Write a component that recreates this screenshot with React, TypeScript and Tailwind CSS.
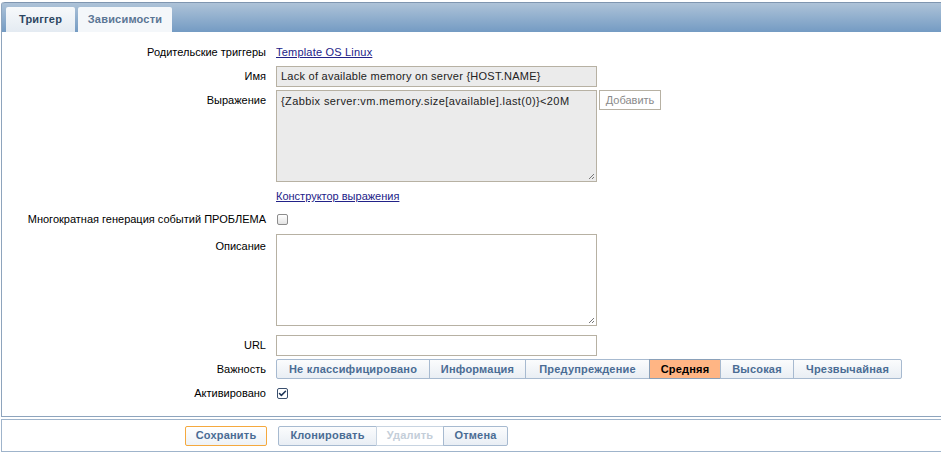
import { Check } from 'lucide-react';

const SEVERITIES = [
    { label: 'Не классифицировано', width: 'w-[154px]' },
    { label: 'Информация', width: 'w-[97px]' },
    { label: 'Предупреждение', width: 'w-[125px]' },
    { label: 'Средняя', width: 'w-[72px]', active: true },
    { label: 'Высокая', width: 'w-[74px]' },
    { label: 'Чрезвычайная', width: 'w-[109px]' },
];

function Row({
    label,
    children,
    className = '',
    labelClass = '',
    top,
}: {
    label: string;
    children: React.ReactNode;
    className?: string;
    labelClass?: string;
    top?: boolean;
}) {
    return (
        <div className={`flex gap-[10px] ${top ? 'items-start' : 'items-center'} ${className}`}>
            <div className={`w-[264px] shrink-0 whitespace-nowrap text-right text-black ${labelClass}`}>{label}</div>
            <div className="flex items-start gap-[2px] whitespace-nowrap">{children}</div>
        </div>
    );
}

function Checkbox({ checked }: { checked?: boolean }) {
    return (
        <span
            className={`ml-px flex h-[11px] w-[11px] items-center justify-center rounded-[2px] border ${
                checked ? 'border-[#3a4f6e] bg-white' : 'border-[#8c8c8c] bg-gradient-to-b from-white to-[#e3e3e3]'
            }`}
        >
            {checked && <Check className="h-[11px] w-[11px] text-[#1d3557]" strokeWidth={4} />}
        </span>
    );
}

function Grip() {
    return (
        <svg className="absolute bottom-[1px] right-[1px] h-[8px] w-[8px]" viewBox="0 0 8 8">
            <path d="M7 2 2 7M7 5 5 7" stroke="#777" strokeWidth="1" />
        </svg>
    );
}

export default function App() {
    return (
        <div className="h-[454px] w-[941px] overflow-hidden bg-white pt-[2px] text-[11px] leading-[13px] [font-family:'Liberation_Sans',Arial,sans-serif]">
            {/* main frame */}
            <div className="ml-px h-[415px] rounded-tl-[3px] border-b border-l border-[#8ea4bd]">
                <div className="flex h-[30px] items-end gap-[3px] rounded-tl-[3px] border-t border-[#7f96b0] bg-gradient-to-b from-[#aec3d8] to-[#749bc3] pl-[4px]">
                    <div className="flex h-[25px] w-[69px] items-center justify-center rounded-t-[2px] bg-gradient-to-b from-[#f7f9fb] to-[#e4ebf2] font-bold tracking-[0.2px] text-[#2d4662]">
                        Триггер
                    </div>
                    <div className="flex h-[25px] w-[94px] items-center justify-center rounded-t-[2px] bg-[#f4f7fa] font-bold tracking-[0.2px] text-[#5a7594]">
                        Зависимости
                    </div>
                </div>

                <div className="flex flex-col">
                    <Row label="Родительские триггеры" className="mt-[14px]">
                        <a className="text-[#222288] underline tracking-[0.2px]">Template OS Linux</a>
                    </Row>
                    <Row label="Имя" className="mt-[7px]">
                        <div className="flex h-[21px] w-[321px] items-center border border-[#b7b1a3] bg-[#ebebeb] px-[4px] tracking-[0.25px] text-[#222]">
                            Lack of available memory on server {'{HOST.NAME}'}
                        </div>
                    </Row>
                    <Row label="Выражение" top className="mt-[3px]" labelClass="pt-[4px]">
                        <div className="relative h-[92px] w-[321px] border border-[#b7b1a3] bg-[#ebebeb] px-[4px] pt-[4px] tracking-[0.4px] text-[#222]">
                            {'{Zabbix server:vm.memory.size[available].last(0)}<20M'}
                            <Grip />
                        </div>
                        <button className="h-[20px] w-[62px] border border-[#b7b1a3] bg-white text-[#8a8a8a]">Добавить</button>
                    </Row>
                    <Row label="" className="mt-[8px]">
                        <a className="text-[#222288] underline">Конструктор выражения</a>
                    </Row>
                    <Row label="Многократная генерация событий ПРОБЛЕМА" className="mt-[10px]">
                        <Checkbox />
                    </Row>
                    <Row label="Описание" top className="mt-[8px]" labelClass="pt-[6px]">
                        <div className="relative h-[92px] w-[321px] border border-[#b7b1a3] bg-white">
                            <Grip />
                        </div>
                    </Row>
                    <Row label="URL" className="mt-[9px]">
                        <div className="h-[21px] w-[321px] border border-[#b7b1a3] bg-white" />
                    </Row>
                    <Row label="Важность" className="mt-[3px]">
                        <div className="flex">
                            {SEVERITIES.map((s) => (
                                <div
                                    key={s.label}
                                    className={`-ml-px flex h-[20px] items-center justify-center border font-bold tracking-[0.2px] first:ml-0 first:rounded-l-[2px] last:rounded-r-[2px] ${s.width} ${
                                        s.active
                                            ? 'border-[#8aa0b8] bg-[#ffb584] text-black'
                                            : 'border-[#a7bad0] bg-gradient-to-b from-[#fbfcfd] to-[#e9eef4] text-[#4a6c94]'
                                    }`}
                                >
                                    {s.label}
                                </div>
                            ))}
                        </div>
                    </Row>
                    <Row label="Активировано" className="mt-[8px]">
                        <Checkbox checked />
                    </Row>
                </div>
            </div>

            {/* footer */}
            <div className="mt-[2px] ml-px flex h-[33px] items-center border-y border-l border-[#9fb4cb] pl-[183px]">
                <button className="h-[20px] w-[82px] rounded-[2px] border border-[#f5a93e] bg-gradient-to-b from-white to-[#eef2f6] font-bold tracking-[0.2px] text-[#4a6c94]">
                    Сохранить
                </button>
                <div className="ml-[11px] flex">
                    <button className="h-[20px] w-[99px] rounded-l-[2px] border border-[#a7bad0] bg-gradient-to-b from-[#fbfcfd] to-[#e9eef4] font-bold tracking-[0.2px] text-[#4a6c94]">
                        Клонировать
                    </button>
                    <button className="-ml-px h-[20px] w-[68px] border border-[#c8d4e1] bg-white font-bold tracking-[0.2px] text-[#c4ced9]">
                        Удалить
                    </button>
                    <button className="-ml-px h-[20px] w-[65px] rounded-r-[2px] border border-[#a7bad0] bg-gradient-to-b from-[#fbfcfd] to-[#e9eef4] font-bold tracking-[0.2px] text-[#4a6c94]">
                        Отмена
                    </button>
                </div>
            </div>
        </div>
    );
}
